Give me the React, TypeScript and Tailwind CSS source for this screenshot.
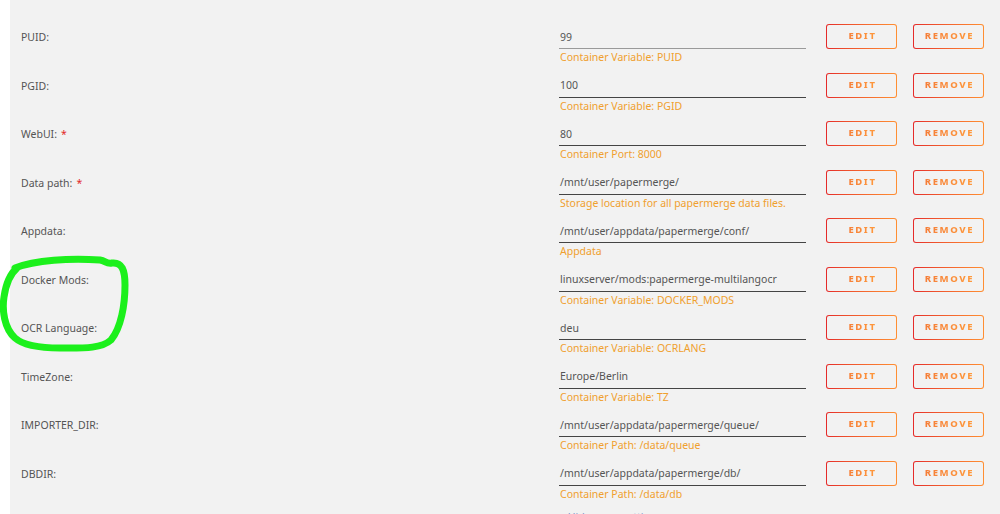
import React from "react";

type Setting = {
  label: string;
  required?: boolean;
  value: string;
  hint: string;
  light?: boolean;
};

const settings: Setting[] = [
  { label: "PUID:", value: "99", hint: "Container Variable: PUID", light: true },
  { label: "PGID:", value: "100", hint: "Container Variable: PGID" },
  { label: "WebUI:", required: true, value: "80", hint: "Container Port: 8000" },
  {
    label: "Data path:",
    required: true,
    value: "/mnt/user/papermerge/",
    hint: "Storage location for all papermerge data files.",
  },
  { label: "Appdata:", value: "/mnt/user/appdata/papermerge/conf/", hint: "Appdata" },
  {
    label: "Docker Mods:",
    value: "linuxserver/mods:papermerge-multilangocr",
    hint: "Container Variable: DOCKER_MODS",
  },
  { label: "OCR Language:", value: "deu", hint: "Container Variable: OCRLANG" },
  { label: "TimeZone:", value: "Europe/Berlin", hint: "Container Variable: TZ" },
  {
    label: "IMPORTER_DIR:",
    value: "/mnt/user/appdata/papermerge/queue/",
    hint: "Container Path: /data/queue",
  },
  { label: "DBDIR:", value: "/mnt/user/appdata/papermerge/db/", hint: "Container Path: /data/db" },
];

function GradientButton({ children }: { children: string }) {
  return (
    <div className="h-[25px] w-[71px] rounded-[3px] bg-gradient-to-r from-[#e52a2a] to-[#ff8f33] p-px">
      <div className="flex h-full w-full items-center justify-center rounded-[2px] bg-[#f2f2f2]">
        <span className="bg-gradient-to-r from-[#f57d38] to-[#ff9a3c] bg-clip-text pl-[2px] text-[9.5px] font-extrabold tracking-[1.6px] text-transparent">
          {children}
        </span>
      </div>
    </div>
  );
}

function SettingRow({ s }: { s: Setting }) {
  return (
    <div className="flex h-[48.5px]">
      <div className="mt-[11.5px] flex h-[25px] w-[538px] items-center pt-[3px] text-[#555]">
        {s.label}
        {s.required && <span className="ml-[4px] text-[#e22828]">*</span>}
      </div>
      <div className="w-[247px]">
        <div
          className={`mt-[11.5px] flex h-[25px] items-center border-b pl-px pt-[3px] text-[#555] ${
            s.light ? "border-[#9a9a9a]" : "border-[#444]"
          }`}
        >
          {s.value}
        </div>
        <div className="mt-[1px] pl-px leading-[14px] text-[#f0a02e]">{s.hint}</div>
      </div>
      <div className="ml-[20px] mt-[11.5px] flex gap-[16px]">
        <GradientButton>EDIT</GradientButton>
        <GradientButton>REMOVE</GradientButton>
      </div>
    </div>
  );
}

export default function App() {
  return (
    <div
      className="relative flex h-[514px] overflow-hidden bg-white text-[10.5px]"
      style={{ fontFamily: '"Noto Sans", "Open Sans", sans-serif' }}
    >
      <div className="w-[10px] shrink-0 bg-white" />
      <div className="flex-1 bg-[#f2f2f2] pl-[11px] pt-[12.5px]">
        {settings.map((s) => (
          <SettingRow key={s.label} s={s} />
        ))}
        <div className="ml-[538px] mt-[12px] leading-[14px] text-[#7d93c9]">
          + Hide more settings...
        </div>
      </div>

      <svg
        className="pointer-events-none absolute left-0 top-[255px]"
        width="140"
        height="100"
        viewBox="0 0 140 100"
        fill="none"
      >
        <path
          d="M15 13 C 35 5, 70 3, 100 5 C 106 6, 106 9, 112 8 C 122 7, 125 15, 125 30 C 125 50, 121 73, 111 85 C 101 94, 82 93, 60 93 C 40 93, 24 91, 15 83 C 4 73, 2 55, 4 42 C 6 28, 10 19, 17 13"
          stroke="#1cf01c"
          strokeWidth="7"
          strokeLinecap="round"
          strokeLinejoin="round"
        />
      </svg>
    </div>
  );
}
